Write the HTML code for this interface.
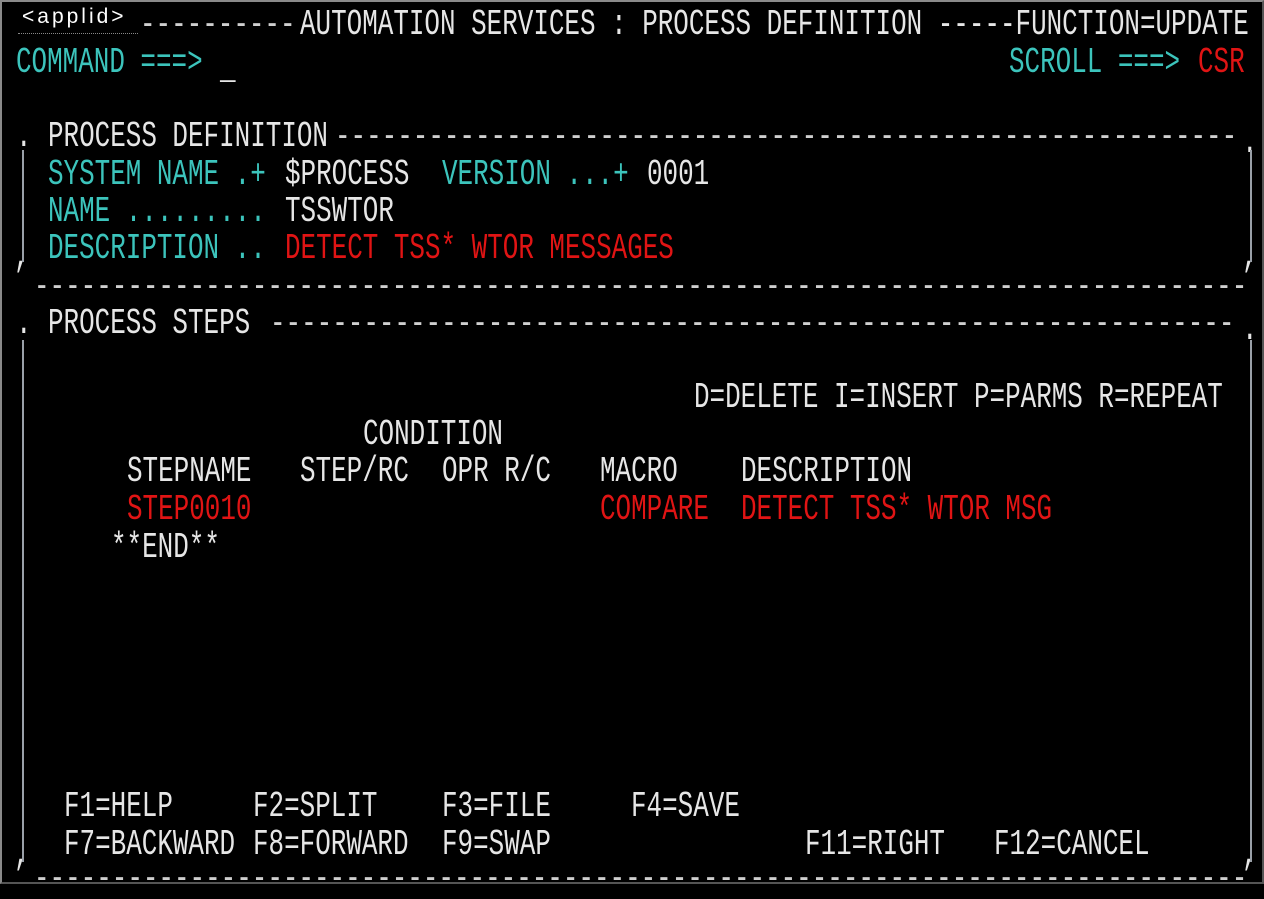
<!DOCTYPE html>
<html><head><meta charset="utf-8"><style>
html,body{margin:0;padding:0;background:#000;}
body{width:1264px;height:884px;position:relative;overflow:hidden;background:#000;}
.frame{position:absolute;left:0;top:0;width:1264px;height:884px;box-sizing:border-box;border:2px solid #8a8a8a;border-right-color:#555;border-bottom-color:#555;}
.t{position:absolute;white-space:pre;font-family:"Liberation Mono",monospace;font-size:36px;line-height:37px;transform:scaleX(.72);transform-origin:0 0;color:#e6e6e6;}
.c{color:#3cc4bc;}
.r{color:#e01414;}
.w{color:#e6e6e6;}
.d{color:#cfcfcf;}
.bar{position:absolute;width:2px;background:#9aa0a8;}
.app{position:absolute;left:22px;top:5px;font-family:"Liberation Sans",sans-serif;font-size:21px;color:#fff;letter-spacing:3px;}
.und{position:absolute;left:18px;top:33px;width:120px;border-top:1px dotted #888;}
</style></head><body>
<div class="frame"></div>
<div class="app">&lt;applid&gt;</div><div class="und"></div>

<div class="t d" style="left:140px;top:6px">----------</div>
<div class="t" style="left:300px;top:6px">AUTOMATION SERVICES : PROCESS DEFINITION -----FUNCTION=UPDATE</div>
<div class="t c" style="left:16px;top:44px">COMMAND ===&gt;</div>
<div class="t w" style="left:220px;top:50px">_</div>
<div class="t c" style="left:1009px;top:44px">SCROLL ===&gt;</div>
<div class="t r" style="left:1198px;top:44px">CSR</div>
<div class="t" style="left:16px;top:118px">.</div>
<div class="t" style="left:48px;top:118px">PROCESS DEFINITION</div>
<div class="t d" style="left:335px;top:118px">----------------------------------------------------------</div>
<div class="t" style="left:1242px;top:124px">.</div>
<div class="t c" style="left:48px;top:156px">SYSTEM NAME .+</div>
<div class="t w" style="left:285px;top:156px">$PROCESS</div>
<div class="t c" style="left:442px;top:156px">VERSION ...+</div>
<div class="t w" style="left:647px;top:156px">0001</div>
<div class="t c" style="left:48px;top:193px">NAME .........</div>
<div class="t w" style="left:285px;top:193px">TSSWTOR</div>
<div class="t c" style="left:48px;top:230px">DESCRIPTION ..</div>
<div class="t r" style="left:285px;top:230px">DETECT TSS* WTOR MESSAGES</div>
<div class="t" style="left:14px;top:238px">,</div>
<div class="t" style="left:1242px;top:238px">,</div>
<div class="t d" style="left:34px;top:268px">------------------------------------------------------------------------------</div>
<div class="t" style="left:16px;top:305px">.</div>
<div class="t" style="left:48px;top:305px">PROCESS STEPS</div>
<div class="t d" style="left:270px;top:305px">--------------------------------------------------------------</div>
<div class="t" style="left:1242px;top:311px">.</div>
<div class="t" style="left:694px;top:379px">D=DELETE I=INSERT P=PARMS R=REPEAT</div>
<div class="t" style="left:363px;top:416px">CONDITION</div>
<div class="t" style="left:127px;top:453px">STEPNAME</div>
<div class="t" style="left:300px;top:453px">STEP/RC</div>
<div class="t" style="left:442px;top:453px">OPR R/C</div>
<div class="t" style="left:600px;top:453px">MACRO</div>
<div class="t" style="left:741px;top:453px">DESCRIPTION</div>
<div class="t r" style="left:127px;top:491px">STEP0010</div>
<div class="t r" style="left:600px;top:491px">COMPARE</div>
<div class="t r" style="left:741px;top:491px">DETECT TSS* WTOR MSG</div>
<div class="t" style="left:111px;top:529px">**END**</div>
<div class="t" style="left:64px;top:788px">F1=HELP</div>
<div class="t" style="left:253px;top:788px">F2=SPLIT</div>
<div class="t" style="left:442px;top:788px">F3=FILE</div>
<div class="t" style="left:631px;top:788px">F4=SAVE</div>
<div class="t" style="left:64px;top:826px">F7=BACKWARD</div>
<div class="t" style="left:253px;top:826px">F8=FORWARD</div>
<div class="t" style="left:442px;top:826px">F9=SWAP</div>
<div class="t" style="left:805px;top:826px">F11=RIGHT</div>
<div class="t" style="left:994px;top:826px">F12=CANCEL</div>
<div class="t" style="left:14px;top:836px">,</div>
<div class="t" style="left:1242px;top:836px">,</div>
<div class="t d" style="left:34px;top:860px">------------------------------------------------------------------------------</div>

<div class="bar" style="left:22px;top:150px;height:112px"></div>
<div class="bar" style="left:1250px;top:150px;height:112px"></div>
<div class="bar" style="left:22px;top:340px;height:522px"></div>
<div class="bar" style="left:1250px;top:340px;height:522px"></div>
</body></html>
